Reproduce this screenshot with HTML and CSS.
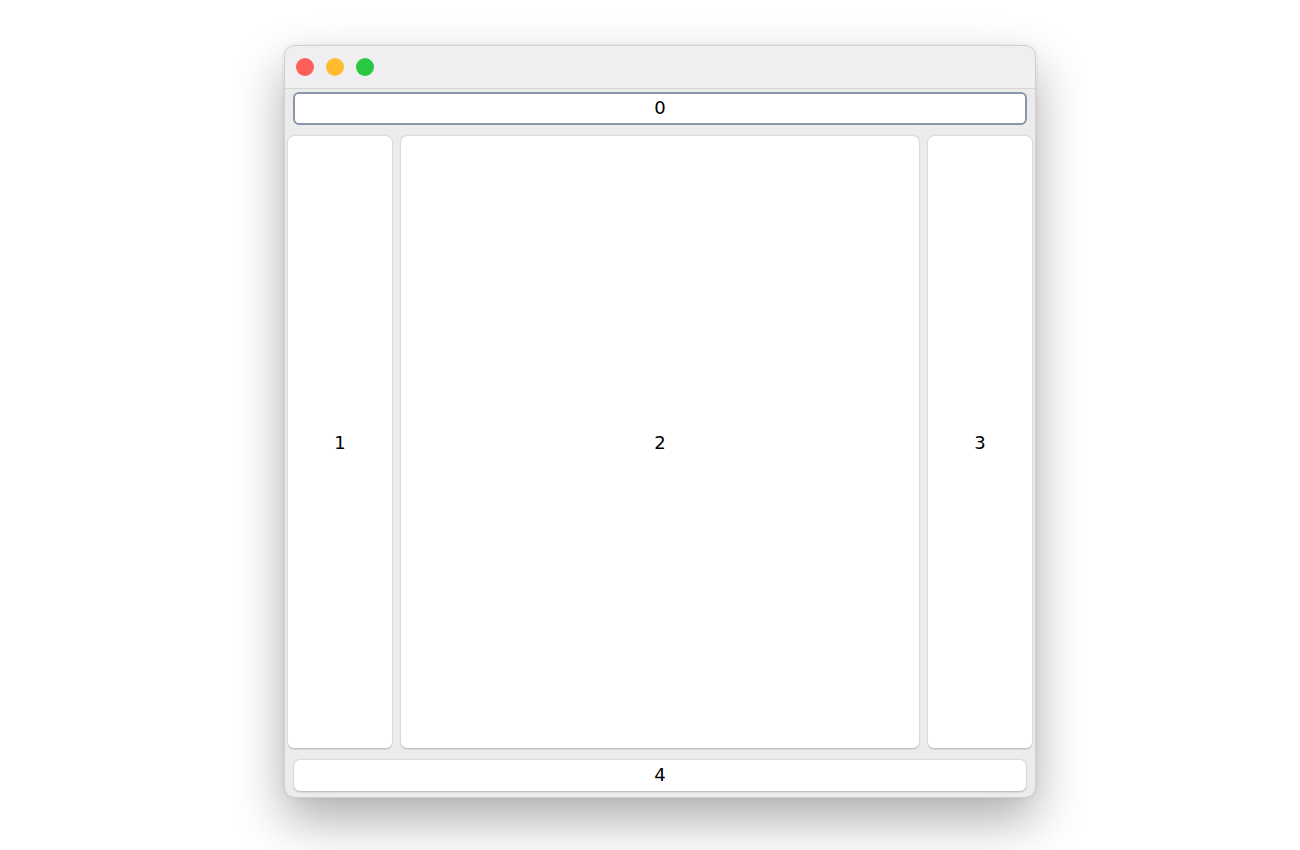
FILE: index.html
```html
<!DOCTYPE html>
<html>
<head>
<meta charset="utf-8">
<link rel="stylesheet" href="styles.css">
</head>
<body>
<div class="window">
  <div class="titlebar">
    <span class="light red"></span>
    <span class="light yellow"></span>
    <span class="light green"></span>
  </div>
  <div class="content">
    <div class="top-field">0</div>
    <div class="panels">
      <div class="panel side">1</div>
      <div class="panel main">2</div>
      <div class="panel side">3</div>
    </div>
    <div class="bottom-bar">4</div>
  </div>
</div>
</body>
</html>
```
FILE: styles.css
```css
html, body {
  margin: 0;
  padding: 0;
  background: #ffffff;
  width: 1300px;
  height: 850px;
  overflow: hidden;
}
body {
  font-family: "DejaVu Sans", "Liberation Sans", sans-serif;
  font-size: 18px;
  color: #000;
  padding-top: 45px;
  padding-left: 284px;
  box-sizing: border-box;
}
.window {
  width: 752px;
  height: 753px;
  box-sizing: border-box;
  border: 1px solid #cfcfd1;
  border-radius: 11px;
  background: #ececec;
  overflow: hidden;
  box-shadow: 0 22px 50px rgba(0, 0, 0, 0.32), 0 0 4px rgba(0, 0, 0, 0.08);
  display: flex;
  flex-direction: column;
}
.titlebar {
  height: 42px;
  flex: none;
  background: #efeff2;
  border-bottom: 1px solid #d6d6d8;
  display: flex;
  align-items: center;
  gap: 12px;
  padding-left: 11px;
}
.light {
  width: 18px;
  height: 18px;
  border-radius: 50%;
  display: block;
}
.red { background: #fe5f57; }
.yellow { background: #febc2e; }
.green { background: #28c840; }
.content {
  flex: 1;
  display: flex;
  flex-direction: column;
  padding: 3px 3px 6px 3px;
}
.top-field {
  height: 33px;
  margin: 0 5px 0 5px;
  box-sizing: border-box;
  border: 2px solid #8996a9;
  border-radius: 6px;
  background: #fff;
  display: flex;
  align-items: center;
  justify-content: center;
  padding-bottom: 2px;
}
.panels {
  height: 612px;
  margin-top: 11px;
  display: flex;
  gap: 9px;
}
.panel {
  background: #fff;
  border-radius: 6px;
  box-shadow: 0 0.5px 2px rgba(0, 0, 0, 0.25);
  display: flex;
  align-items: center;
  justify-content: center;
}
.side { width: 104px; flex: none; }
.main { flex: 1; }
.bottom-bar {
  height: 31px;
  margin: 12px 6px 0 6px;
  background: #fff;
  border-radius: 6px;
  box-shadow: 0 0.5px 2px rgba(0, 0, 0, 0.25);
  display: flex;
  align-items: center;
  justify-content: center;
  padding-bottom: 2px;
  box-sizing: border-box;
}
```
